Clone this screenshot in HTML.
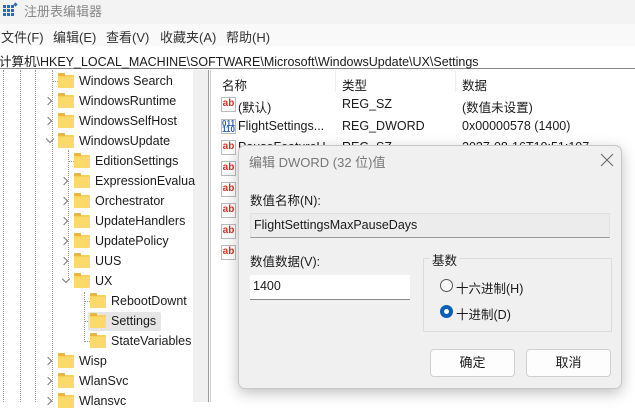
<!DOCTYPE html>
<html><head><meta charset="utf-8"><style>
*{margin:0;padding:0;box-sizing:border-box}
body{width:635px;height:402px;overflow:hidden;background:#fff;font-family:"Liberation Sans","Noto Sans CJK SC",sans-serif;font-size:12.5px;color:#1a1a1a;position:relative}
.a{position:absolute;white-space:nowrap}
.dl{position:absolute;width:0;border-left:1px dotted #999}
.dh{position:absolute;height:0;border-top:1px dotted #999}
.f{position:absolute;width:16px;height:13px;background:#f8cf5a;border-radius:1px}
.f:before{content:"";position:absolute;left:0;top:-2px;width:7px;height:3px;background:#e9b53c;border-radius:1px 1px 0 0}
.f:after{content:"";position:absolute;left:0;top:2px;width:16px;height:11px;background:#fcd96a;border-radius:1px}
.ch{position:absolute;width:6px;height:6px;border-right:1.2px solid #777;border-bottom:1.2px solid #777}
.ab{position:absolute;width:15px;height:15px;border:1px solid #bbb;background:#fff;color:#c9372c;font-size:10px;font-weight:bold;line-height:12px;text-align:center}
.btn{position:absolute;background:#fdfdfd;border:1px solid #d0d0d0;border-radius:4px;text-align:center;line-height:26px;font-size:13px}
</style></head><body>
<div class="a" style="left:0;top:0;width:635px;height:24px;background:#f3f3f3"></div>
<svg class="a" style="left:2px;top:2px" width="16" height="16"><rect x="1" y="3" width="11" height="11" fill="#1e6fc9"/><g stroke="#f3f3f3" stroke-width="1"><line x1="4.5" y1="3" x2="4.5" y2="14"/><line x1="8.5" y1="3" x2="8.5" y2="14"/><line x1="1" y1="6.5" x2="12" y2="6.5"/><line x1="1" y1="10.5" x2="12" y2="10.5"/></g><rect x="12" y="1" width="3" height="3" fill="#1e6fc9" transform="rotate(45 13.5 2.5)"/></svg>
<div class="a" style="left:24px;top:1px;color:#888;font-size:13px">注册表编辑器</div>
<div class="a" style="left:0;top:24px;width:635px;height:22px;background:#f9f9f9"></div>
<div class="a" style="left:1px;top:27px;color:#333;font-size:13px">文件(F)</div>
<div class="a" style="left:53px;top:27px;color:#333;font-size:13px">编辑(E)</div>
<div class="a" style="left:106px;top:27px;color:#333;font-size:13px">查看(V)</div>
<div class="a" style="left:160px;top:27px;color:#333;font-size:13px">收藏夹(A)</div>
<div class="a" style="left:226px;top:27px;color:#333;font-size:13px">帮助(H)</div>
<div class="a" style="left:0;top:48px;width:635px;height:21px;border-bottom:1px solid #888;background:#fff"></div>
<div class="a" style="left:-1px;top:51px;font-size:12.5px">计算机\HKEY_LOCAL_MACHINE\SOFTWARE\Microsoft\WindowsUpdate\UX\Settings</div>
<div class="a" style="left:193px;top:70px;width:15px;height:332px;background:#f0f0f0"></div>
<div class="a" style="left:208px;top:70px;width:3px;height:332px;background:#fff;border-left:1px solid #999;border-right:1px solid #ccc"></div>
<div class="dl" style="left:3px;top:70px;height:332px"></div>
<div class="dl" style="left:20px;top:70px;height:332px"></div>
<div class="dl" style="left:35px;top:70px;height:332px"></div>
<div class="dl" style="left:52px;top:70px;height:332px"></div>
<div class="dl" style="left:68px;top:150px;height:130px"></div>
<div class="dl" style="left:84px;top:292px;height:50px"></div>
<div class="dh" style="left:52px;top:81px;width:6px"></div>
<div class="dh" style="left:68px;top:161px;width:6px"></div>
<div class="dh" style="left:84px;top:301px;width:6px"></div>
<div class="dh" style="left:84px;top:321px;width:6px"></div>
<div class="dh" style="left:84px;top:341px;width:6px"></div>
<div class="a" style="left:88px;top:312px;width:73px;height:19px;background:#e5e5e5;border-radius:2px"></div>
<div class="f" style="left:58px;top:75px"></div><div class="a" style="left:79px;top:74px">Windows Search</div>
<div class="ch" style="left:45px;top:98px;transform:rotate(-45deg)"></div><div class="f" style="left:58px;top:95px"></div><div class="a" style="left:79px;top:94px">WindowsRuntime</div>
<div class="ch" style="left:45px;top:118px;transform:rotate(-45deg)"></div><div class="f" style="left:58px;top:115px"></div><div class="a" style="left:79px;top:114px">WindowsSelfHost</div>
<div class="ch" style="left:47px;top:136px;transform:rotate(45deg)"></div><div class="f" style="left:58px;top:135px"></div><div class="a" style="left:79px;top:134px">WindowsUpdate</div>
<div class="f" style="left:74px;top:155px"></div><div class="a" style="left:95px;top:154px">EditionSettings</div>
<div class="ch" style="left:61px;top:178px;transform:rotate(-45deg)"></div><div class="f" style="left:74px;top:175px"></div><div class="a" style="left:95px;top:174px">ExpressionEvalua</div>
<div class="ch" style="left:61px;top:198px;transform:rotate(-45deg)"></div><div class="f" style="left:74px;top:195px"></div><div class="a" style="left:95px;top:194px">Orchestrator</div>
<div class="ch" style="left:61px;top:218px;transform:rotate(-45deg)"></div><div class="f" style="left:74px;top:215px"></div><div class="a" style="left:95px;top:214px">UpdateHandlers</div>
<div class="ch" style="left:61px;top:238px;transform:rotate(-45deg)"></div><div class="f" style="left:74px;top:235px"></div><div class="a" style="left:95px;top:234px">UpdatePolicy</div>
<div class="ch" style="left:61px;top:258px;transform:rotate(-45deg)"></div><div class="f" style="left:74px;top:255px"></div><div class="a" style="left:95px;top:254px">UUS</div>
<div class="ch" style="left:63px;top:276px;transform:rotate(45deg)"></div><div class="f" style="left:74px;top:275px"></div><div class="a" style="left:95px;top:274px">UX</div>
<div class="f" style="left:90px;top:295px"></div><div class="a" style="left:111px;top:294px">RebootDownt</div>
<div class="f" style="left:90px;top:315px"></div><div class="a" style="left:111px;top:314px">Settings</div>
<div class="f" style="left:90px;top:335px"></div><div class="a" style="left:111px;top:334px">StateVariables</div>
<div class="ch" style="left:45px;top:358px;transform:rotate(-45deg)"></div><div class="f" style="left:58px;top:355px"></div><div class="a" style="left:79px;top:354px">Wisp</div>
<div class="ch" style="left:45px;top:378px;transform:rotate(-45deg)"></div><div class="f" style="left:58px;top:375px"></div><div class="a" style="left:79px;top:374px">WlanSvc</div>
<div class="ch" style="left:45px;top:398px;transform:rotate(-45deg)"></div><div class="f" style="left:58px;top:395px"></div><div class="a" style="left:79px;top:394px">Wlansvc</div>
<div class="a" style="left:335px;top:70px;width:1px;height:22px;background:#eee"></div>
<div class="a" style="left:455px;top:70px;width:1px;height:22px;background:#eee"></div>
<div class="a" style="left:222px;top:75px">名称</div>
<div class="a" style="left:342px;top:75px">类型</div>
<div class="a" style="left:462px;top:75px">数据</div>
<div class="ab" style="left:221px;top:97px">ab</div><div class="a" style="left:238px;top:97px">(默认)</div><div class="a" style="left:342px;top:97px">REG_SZ</div><div class="a" style="left:462px;top:97px">(数值未设置)</div>
<div class="ab" style="left:221px;top:119px;color:#2a5fb0;font-size:8px;line-height:6px;padding-top:1px">011<br>110</div><div class="a" style="left:238px;top:119px">FlightSettings...</div><div class="a" style="left:342px;top:119px">REG_DWORD</div><div class="a" style="left:462px;top:119px">0x00000578 (1400)</div>
<div class="a" style="left:238px;top:140px">PauseFeatureU</div><div class="a" style="left:342px;top:140px">REG_SZ</div><div class="a" style="left:462px;top:140px">2027-08-16T10:51:107</div>
<div class="ab" style="left:221px;top:140px">ab</div>
<div class="ab" style="left:221px;top:161px">ab</div>
<div class="ab" style="left:221px;top:182px">ab</div>
<div class="ab" style="left:221px;top:203px">ab</div>
<div class="ab" style="left:221px;top:224px">ab</div>
<div class="ab" style="left:221px;top:245px">ab</div>
<div class="a" style="left:238px;top:145px;width:384px;height:244px;background:#f0f0f0;border:1px solid #c8c8c8;border-radius:7px;box-shadow:0 4px 14px rgba(0,0,0,.25)"></div>
<div class="a" style="left:249px;top:152px;color:#777;font-size:13px">编辑 DWORD (32 位)值</div>
<svg class="a" style="left:600px;top:153px" width="14" height="14"><path d="M1 1L13 13M13 1L1 13" stroke="#666" stroke-width="1"/></svg>
<div class="a" style="left:250px;top:190px">数值名称(N):</div>
<div class="a" style="left:250px;top:213px;width:360px;height:25px;background:#ececec;border:1px solid #e0e0e0;border-bottom:1px solid #999"></div>
<div class="a" style="left:254px;top:218px">FlightSettingsMaxPauseDays</div>
<div class="a" style="left:250px;top:251px">数值数据(V):</div>
<div class="a" style="left:250px;top:275px;width:160px;height:25px;background:#fff;border-bottom:1px solid #888"></div>
<div class="a" style="left:253px;top:279px">1400</div>
<div class="a" style="left:423px;top:258px;width:189px;height:74px;border:1px solid #dcdcdc"></div>
<div class="a" style="left:430px;top:250px;background:#f0f0f0;padding:0 2px">基数</div>
<div class="a" style="left:440px;top:279px;width:13px;height:13px;border:1px solid #555;border-radius:50%;background:#fafafa"></div>
<div class="a" style="left:456px;top:278px">十六进制(H)</div>
<div class="a" style="left:440px;top:305px;width:13px;height:13px;border-radius:50%;background:#0a5fb4"><div style="position:absolute;left:4px;top:4px;width:5px;height:5px;border-radius:50%;background:#fff"></div></div>
<div class="a" style="left:456px;top:304px">十进制(D)</div>
<div class="btn" style="left:430px;top:349px;width:85px;height:28px">确定</div>
<div class="btn" style="left:526px;top:349px;width:85px;height:28px">取消</div>
</body></html>
